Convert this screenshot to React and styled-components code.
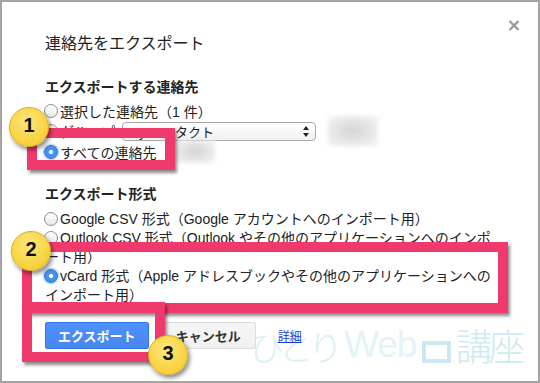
import React from "react";
import styled, { createGlobalStyle } from "styled-components";

const FONT = `"Liberation Sans", "Noto Sans CJK JP", sans-serif`;

const Global = createGlobalStyle`
  html, body { margin: 0; padding: 0; background: #fff; }
  body { font-family: ${FONT}; }
`;

const Frame = styled.div`
  position: relative;
  width: 540px;
  height: 383px;
  box-sizing: border-box;
  border: 2px solid #a4a4a4;
  background: #fff;
  overflow: hidden;
  font-family: ${FONT};
  font-size: 14px;
  color: #222;
  text-spacing-trim: space-all;
`;

const Content = styled.div`
  position: relative;
  padding: 18px 18px 0 43px;
`;

const Header = styled.div`
  display: flex;
  justify-content: space-between;
  align-items: flex-start;
`;

const Title = styled.h1`
  margin: 14px 0 0;
  font-size: 16px;
  line-height: 20px;
  font-weight: normal;
  color: #222;
`;

const CloseIcon = styled.svg`
  display: block;
  width: 12px;
  height: 11px;
`;

const SectionHeading = styled.h2`
  margin: ${(p) => p.$mt}px 0 0;
  font-size: 14px;
  line-height: 18px;
  font-weight: bold;
  color: #222;
`;

const Row = styled.div`
  display: flex;
  align-items: center;
  height: 20px;
  margin-top: ${(p) => p.$mt || 0}px;
  white-space: nowrap;
`;

const Radio = styled.span`
  display: inline-block;
  box-sizing: border-box;
  width: 14px;
  height: 14px;
  border-radius: 50%;
  margin: 0 2px 0 -1px;
  vertical-align: -2px;
  flex: none;
  border: 1px solid ${(p) => (p.$checked ? "#2c74cc" : "#8d8d8d")};
  background: ${(p) =>
    p.$checked
      ? "radial-gradient(circle, #fff 0 1.6px, #4b97ec 2.4px, #3a86de 100%)"
      : "linear-gradient(#ffffff, #e9e9e9)"};
  box-shadow: ${(p) => (p.$checked ? "0 0 2px 1px rgba(90,160,235,0.55)" : "none")};
`;

const OptionList = styled.div`
  margin-top: 7px;
  width: 452px;
`;

const Option = styled.div`
  line-height: 19px;
`;

const SelectBox = styled.div`
  display: flex;
  align-items: center;
  justify-content: space-between;
  box-sizing: border-box;
  width: 194px;
  height: 19px;
  margin-left: 3px;
  padding: 0 6px 0 5px;
  border: 1px solid #a9a9a9;
  border-radius: 4px;
  background: linear-gradient(#ffffff, #f1f1f1);
  font-size: 13px;
  color: #222;
`;

const ButtonRow = styled.div`
  display: flex;
  align-items: center;
  margin-top: 17px;
`;

const Button = styled.button`
  height: 27px;
  box-sizing: border-box;
  padding: 0 ${(p) => (p.$primary ? 12 : 14)}px;
  margin-left: ${(p) => (p.$primary ? 0 : 12)}px;
  border-radius: 2px;
  font-family: ${FONT};
  font-size: 13px;
  font-weight: bold;
  border: 1px solid ${(p) => (p.$primary ? "#3079ed" : "#dcdcdc")};
  color: ${(p) => (p.$primary ? "#fff" : "#333")};
  background: ${(p) =>
    p.$primary ? "linear-gradient(#4d90fe, #4787ed)" : "linear-gradient(#f5f5f5, #f1f1f1)"};
`;

const DetailLink = styled.a`
  margin-left: 22px;
  font-size: 12px;
  color: #1a3bd0;
  text-decoration: underline;
`;

const Watermark = styled.div`
  position: absolute;
  left: 247px;
  top: 316px;
  display: flex;
  align-items: center;
  font-family: "Noto Sans CJK JP", sans-serif;
  font-weight: 300;
  font-size: 35px;
  letter-spacing: -5px;
  color: #dcf0f6;
  white-space: nowrap;
`;

const WatermarkWeb = styled.span`
  font-family: "Liberation Sans", sans-serif;
  font-size: 37px;
  letter-spacing: -1px;
  margin-left: 6px;
  color: #e4f3f8;
`;

const WatermarkBox = styled.span`
  display: inline-block;
  box-sizing: border-box;
  width: 29px;
  height: 22px;
  margin: 14px 4px 0 6px;
  border: 4px solid #cbe7f1;
`;

const WatermarkStrong = styled.span`
  font-size: 37px;
  letter-spacing: -4px;
  color: #cfe9f2;
`;

const PinkBox = styled.div`
  position: absolute;
  left: ${(p) => p.$x}px;
  top: ${(p) => p.$y}px;
  width: ${(p) => p.$w}px;
  height: ${(p) => p.$h}px;
  box-sizing: border-box;
  border: 10px solid #f03a6e;
  box-shadow: 2px 3px 3px rgba(0, 0, 0, 0.45);
`;

const Badge = styled.div`
  position: absolute;
  left: ${(p) => p.$x}px;
  top: ${(p) => p.$y}px;
  width: 40px;
  height: 40px;
  box-sizing: border-box;
  border-radius: 50%;
  border: 1px solid #d8b120;
  background: radial-gradient(circle at 45% 35%, #fde77c, #f6d13a 70%, #efc525);
  box-shadow: 2px 3px 4px rgba(0, 0, 0, 0.45);
  display: flex;
  align-items: center;
  justify-content: center;
  padding-bottom: 4px;
  font-family: "Liberation Sans", sans-serif;
  font-weight: bold;
  font-size: 20px;
  color: #111;
`;

const BlurPatch = styled.div`
  position: absolute;
  left: ${(p) => p.$x}px;
  top: ${(p) => p.$y}px;
  width: ${(p) => p.$w}px;
  height: ${(p) => p.$h}px;
  background: radial-gradient(ellipse at 50% 50%, #d4d4d4, #ececec 70%, #f3f3f3);
  filter: blur(2px);
`;

export default function App() {
  return (
    <>
      <Global />
      <Frame>
        <Watermark>
          ひとり<WatermarkWeb>Web</WatermarkWeb>
          <WatermarkBox />
          <WatermarkStrong>講座</WatermarkStrong>
        </Watermark>
        <Content>
          <Header>
            <Title>連絡先をエクスポート</Title>
            <CloseIcon viewBox="0 0 12 11">
              <path d="M1.5 1 L10.5 10 M10.5 1 L1.5 10" stroke="#9a9a9a" strokeWidth="2.4" />
            </CloseIcon>
          </Header>

          <SectionHeading $mt={24}>エクスポートする連絡先</SectionHeading>
          <Row $mt={5}>
            <Radio />
            選択した連絡先（1 件）
          </Row>
          <Row>
            <Radio />
            グループ:
            <SelectBox>
              <span>My コンタクト</span>
              <svg width="6" height="11" viewBox="0 0 6 11">
                <path d="M3 0 L6 4 L0 4 Z M0 7 L6 7 L3 11 Z" fill="#222" />
              </svg>
            </SelectBox>
          </Row>
          <Row $mt={1}>
            <Radio $checked />
            すべての連絡先
          </Row>

          <SectionHeading $mt={23}>エクスポート形式</SectionHeading>
          <OptionList>
            <Option>
              <Radio />
              Google CSV 形式（Google アカウントへのインポート用）
            </Option>
            <Option>
              <Radio />
              Outlook CSV 形式（Outlook やその他のアプリケーションへのインポート用）
            </Option>
            <Option>
              <Radio $checked />
              vCard 形式（Apple アドレスブックやその他のアプリケーションへのインポート用）
            </Option>
          </OptionList>

          <ButtonRow>
            <Button $primary>エクスポート</Button>
            <Button>キャンセル</Button>
            <DetailLink>詳細</DetailLink>
          </ButtonRow>
        </Content>

        <BlurPatch $x={326} $y={114} $w={50} $h={30} />
        <BlurPatch $x={173} $y={138} $w={40} $h={23} />

        <PinkBox $x={25} $y={126} $w={148} $h={42} />
        <PinkBox $x={20} $y={240} $w={486} $h={71} />
        <PinkBox $x={20} $y={300} $w={143} $h={60} />

        <Badge $x={7} $y={105}>1</Badge>
        <Badge $x={9} $y={229}>2</Badge>
        <Badge $x={146} $y={333}>3</Badge>
      </Frame>
    </>
  );
}
